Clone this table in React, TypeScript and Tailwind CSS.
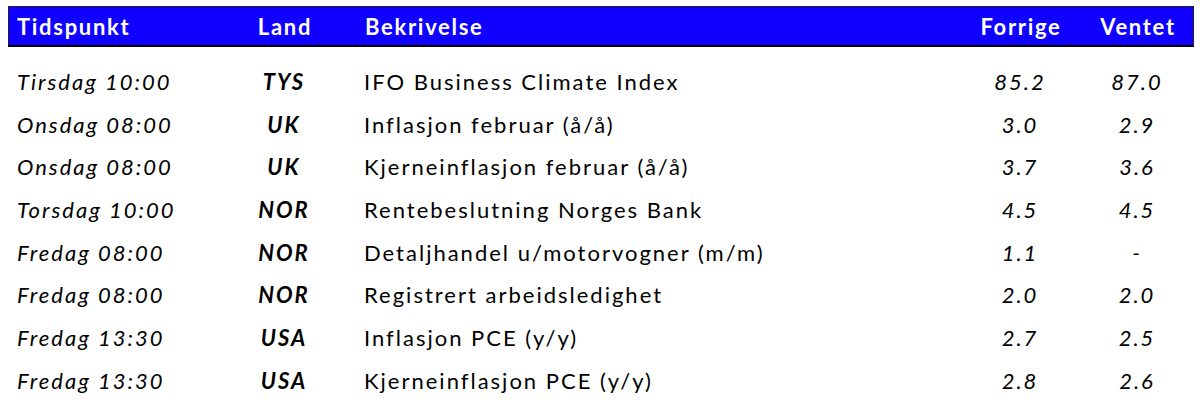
import React from "react";

type Row = {
  time: string;
  land: string;
  desc: string;
  prev: string;
  exp: string;
};

const ROWS: Row[] = [
  { time: "Tirsdag 10:00", land: "TYS", desc: "IFO Business Climate Index", prev: "85.2", exp: "87.0" },
  { time: "Onsdag 08:00", land: "UK", desc: "Inflasjon februar (å/å)", prev: "3.0", exp: "2.9" },
  { time: "Onsdag 08:00", land: "UK", desc: "Kjerneinflasjon februar (å/å)", prev: "3.7", exp: "3.6" },
  { time: "Torsdag 10:00", land: "NOR", desc: "Rentebeslutning Norges Bank", prev: "4.5", exp: "4.5" },
  { time: "Fredag 08:00", land: "NOR", desc: "Detaljhandel u/motorvogner (m/m)", prev: "1.1", exp: "-" },
  { time: "Fredag 08:00", land: "NOR", desc: "Registrert arbeidsledighet", prev: "2.0", exp: "2.0" },
  { time: "Fredag 13:30", land: "USA", desc: "Inflasjon PCE (y/y)", prev: "2.7", exp: "2.5" },
  { time: "Fredag 13:30", land: "USA", desc: "Kjerneinflasjon PCE (y/y)", prev: "2.8", exp: "2.6" },
];

const cols = "grid grid-cols-[230px_92px_630px_120px_114px]";

export default function App() {
  return (
    <div
      className="w-[1200px] h-[412px] bg-white pt-[6px] pl-[8px]"
      style={{ fontFamily: "Lato, 'Open Sans', sans-serif" }}
    >
      <div className="w-[1186px]">
        {/* Header */}
        <div
          className={`${cols} h-[41px] items-center bg-[#1000ff] border-t border-l border-r border-[#222] border-b-2 border-b-black text-white font-bold text-[22px] tracking-[1.7px]`}
        >
          <div className="pl-[8px]">Tidspunkt</div>
          <div className="text-center">Land</div>
          <div className="pl-[34px]">Bekrivelse</div>
          <div className="text-center">Forrige</div>
          <div className="text-center">Ventet</div>
        </div>

        {/* Rows */}
        <div className="pt-[13px]">
          {ROWS.map((r, i) => (
            <div key={i} className={`${cols} h-[42.7px] items-center text-black text-[22px] tracking-[2px]`}>
              <div className="pl-[9px] italic">{r.time}</div>
              <div className="text-center italic font-bold">{r.land}</div>
              <div className="pl-[34px]">{r.desc}</div>
              <div className="text-center italic">{r.prev}</div>
              <div className="text-center italic">{r.exp}</div>
            </div>
          ))}
        </div>
      </div>
    </div>
  );
}
